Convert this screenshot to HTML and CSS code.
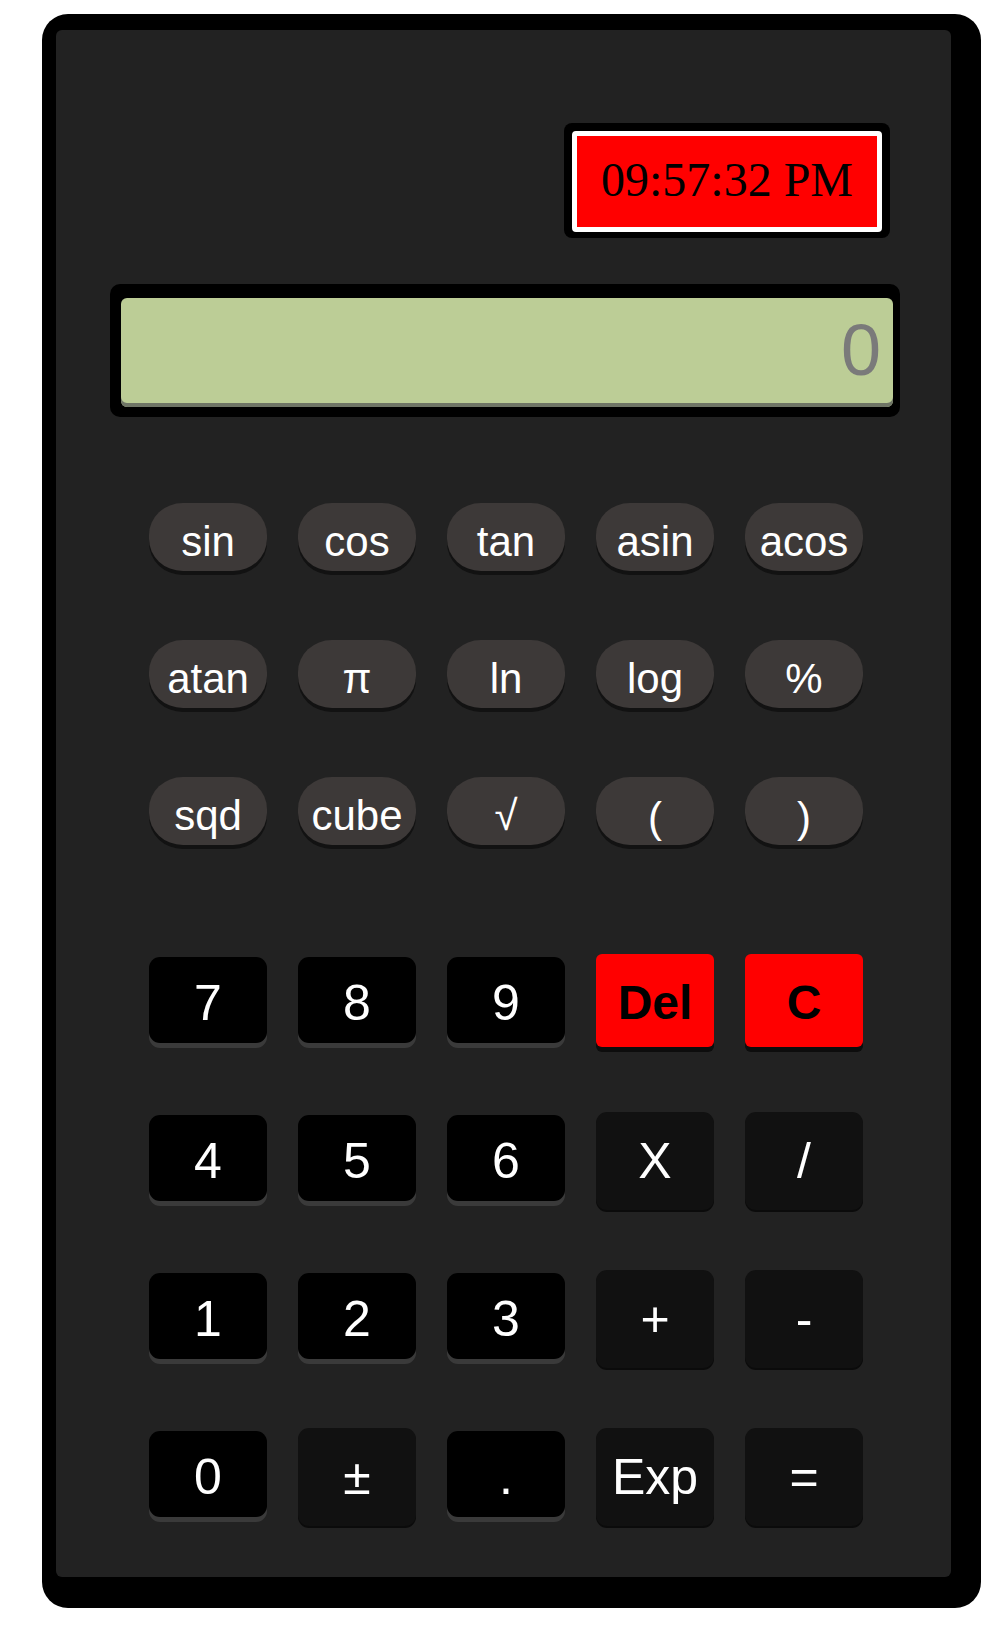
FILE: index.html
```html
<!DOCTYPE html>
<html lang="en">
<head>
<meta charset="utf-8">
<title>Calculator</title>
<link rel="stylesheet" href="styles.css">
</head>
<body>
<div class="calc">
  <div class="panel">
    <div class="clock-frame">
      <div class="clock">09:57:32 PM</div>
    </div>
    <div class="display-frame">
      <div class="display">0</div>
    </div>
    <div class="fn-grid">
      <button class="key fn">sin</button>
      <button class="key fn">cos</button>
      <button class="key fn">tan</button>
      <button class="key fn">asin</button>
      <button class="key fn">acos</button>
      <button class="key fn">atan</button>
      <button class="key fn">π</button>
      <button class="key fn">ln</button>
      <button class="key fn">log</button>
      <button class="key fn">%</button>
      <button class="key fn">sqd</button>
      <button class="key fn">cube</button>
      <button class="key fn">√</button>
      <button class="key fn paren">(</button>
      <button class="key fn paren">)</button>
    </div>
    <div class="num-grid">
      <button class="key digit">7</button>
      <button class="key digit">8</button>
      <button class="key digit">9</button>
      <button class="key red">Del</button>
      <button class="key red">C</button>
      <button class="key digit">4</button>
      <button class="key digit">5</button>
      <button class="key digit">6</button>
      <button class="key op">X</button>
      <button class="key op">/</button>
      <button class="key digit">1</button>
      <button class="key digit">2</button>
      <button class="key digit">3</button>
      <button class="key op">+</button>
      <button class="key op">-</button>
      <button class="key digit">0</button>
      <button class="key op">±</button>
      <button class="key digit">.</button>
      <button class="key op">Exp</button>
      <button class="key op">=</button>
    </div>
  </div>
</div>
</body>
</html>
```

FILE: styles.css
```css
html, body {
  margin: 0;
  padding: 0;
  background: #ffffff;
}

.calc {
  margin: 14px 0 0 42px;
  width: 939px;
  height: 1594px;
  box-sizing: border-box;
  padding: 16px 30px 31px 14px;
  background: #000;
  border-radius: 26px;
}

.panel {
  height: 100%;
  background: #222222;
  border-radius: 6px;
  display: flex;
  flex-direction: column;
  align-items: flex-start;
}

.clock-frame {
  align-self: flex-end;
  margin: 93px 61px 0 0;
  padding: 8px 8px 6px 8px;
  background: #000;
  border-radius: 8px;
}

.clock {
  width: 300px;
  height: 91px;
  border: 5px solid #fff;
  border-radius: 4px;
  background: #ff0000;
  color: #000;
  font-family: "Liberation Serif", "Times New Roman", serif;
  font-size: 48px;
  line-height: 88px;
  text-align: center;
}

.display-frame {
  margin: 46px 0 0 54px;
  width: 790px;
  box-sizing: border-box;
  padding: 14px 7px 10px 11px;
  background: #000;
  border-radius: 10px;
}

.display {
  height: 109px;
  box-sizing: border-box;
  padding-right: 12px;
  background: #bccd96;
  border-radius: 6px;
  box-shadow: inset 0 -4px 0 #6f7566;
  color: #7a7a7a;
  font-family: "Liberation Sans", Arial, sans-serif;
  font-size: 72px;
  line-height: 104px;
  text-align: right;
}

.fn-grid,
.num-grid {
  display: grid;
  grid-template-columns: repeat(5, 118px);
  column-gap: 31px;
  margin-left: 93px;
}

.fn-grid {
  margin-top: 86px;
  row-gap: 69px;
}

.num-grid {
  margin-top: 109px;
  grid-auto-rows: 98px;
  row-gap: 60px;
  align-items: start;
}

.key {
  border: none;
  padding: 0;
  margin: 0;
  box-sizing: border-box;
  font-family: "Liberation Sans", Arial, sans-serif;
  color: #fff;
  cursor: pointer;
}

.fn {
  height: 68px;
  border-radius: 34px / 32px;
  background: #3d3938;
  box-shadow: 0 4px 0 #121212;
  font-size: 42px;
  padding-top: 10px;
  line-height: 58px;
}

.paren {
  padding-top: 14px;
  line-height: 54px;
}

.digit {
  margin-top: 3px;
  height: 86px;
  padding-top: 6px;
  border-radius: 11px;
  background: #000;
  box-shadow: 0 5px 0 #3a3a3a;
  font-size: 50px;
}

.op {
  height: 98px;
  border-radius: 11px;
  background: #111111;
  box-shadow: 0 2px 0 #0b0b0b;
  font-size: 50px;
}

.red {
  height: 93px;
  padding-top: 4px;
  border-radius: 6px;
  background: #ff0000;
  box-shadow: 0 5px 0 #0d0d0d;
  color: #000;
  font-weight: bold;
  font-size: 48px;
}
```
